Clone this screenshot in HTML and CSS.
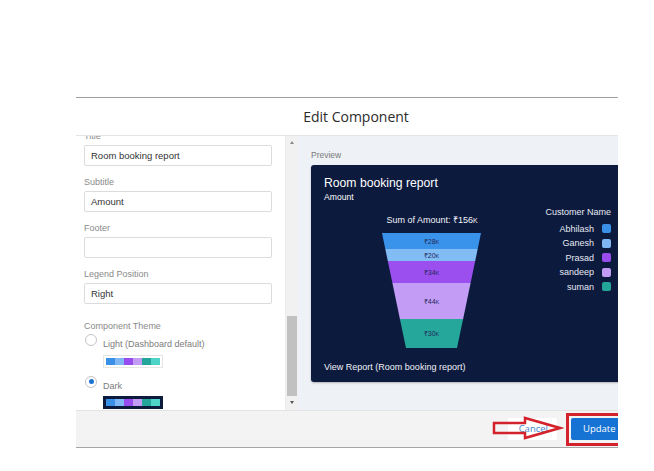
FILE: index.html
```html
<!DOCTYPE html>
<html>
<head>
<meta charset="utf-8">
<link rel="stylesheet" href="styles.css">
</head>
<body>
<div class="stage">
  <div class="clip">
    <div class="modal">
      <div class="modal-header">Edit Component</div>
      <div class="modal-body">
        <div class="form-panel">
          <div class="form-inner">
            <div class="field">
              <div class="label">Title</div>
              <div class="input">Room booking report</div>
            </div>
            <div class="field">
              <div class="label">Subtitle</div>
              <div class="input">Amount</div>
            </div>
            <div class="field">
              <div class="label">Footer</div>
              <div class="input"></div>
            </div>
            <div class="field">
              <div class="label">Legend Position</div>
              <div class="input">Right</div>
            </div>
            <div class="label theme-label">Component Theme</div>
            <div class="radio-row">
              <span class="radio"></span>
              <div class="radio-body">
                <div class="radio-text">Light (Dashboard default)</div>
                <div class="swatch swatch-light">
                  <i class="c1"></i><i class="c2"></i><i class="c3"></i><i class="c4"></i><i class="c5"></i><i class="c6"></i>
                </div>
              </div>
            </div>
            <div class="radio-row radio-row-2">
              <span class="radio checked"></span>
              <div class="radio-body">
                <div class="radio-text">Dark</div>
                <div class="swatch swatch-dark">
                  <i class="c1"></i><i class="c2"></i><i class="c3"></i><i class="c4"></i><i class="c5"></i><i class="c6"></i>
                </div>
              </div>
            </div>
          </div>
        </div>
        <div class="scrollbar">
          <span class="sb-arrow sb-up"></span>
          <span class="sb-space"></span>
          <span class="sb-thumb"></span>
          <span class="sb-arrow sb-down"></span>
        </div>
        <div class="preview">
          <div class="preview-label">Preview</div>
          <div class="card">
            <div class="card-title">Room booking report</div>
            <div class="card-sub">Amount</div>
            <div class="chart-row">
              <div class="chart">
                <div class="chart-title">Sum of Amount: ₹156<span class="k">K</span></div>
                <svg class="funnel" width="216" height="118" viewBox="0 0 216 118">
                  <polygon points="58,2 157,2 153.7,18 61.3,18" fill="#3a93ea"/>
                  <polygon points="61.3,18 153.7,18 151.2,30 63.8,30" fill="#82bcf4"/>
                  <polygon points="63.8,30 151.2,30 146.6,52 68.4,52" fill="#9a4fee"/>
                  <polygon points="68.4,52 146.6,52 139.1,88 75.9,88" fill="#c39cf6"/>
                  <polygon points="75.9,88 139.1,88 133,117 82,117" fill="#25a79c"/>
                  <g class="flabel">
                    <text x="107.5" y="12.5">₹28<tspan font-size="5.5">K</tspan></text>
                    <text x="107.5" y="26.5">₹20<tspan font-size="5.5">K</tspan></text>
                    <text x="107.5" y="43.5">₹34<tspan font-size="5.5">K</tspan></text>
                    <text x="107.5" y="72.5">₹44<tspan font-size="5.5">K</tspan></text>
                    <text x="107.5" y="105">₹30<tspan font-size="5.5">K</tspan></text>
                  </g>
                </svg>
              </div>
              <div class="legend">
                <div class="legend-title">Customer Name</div>
                <div class="legend-item">Abhilash<span class="sq c1"></span></div>
                <div class="legend-item">Ganesh<span class="sq c2"></span></div>
                <div class="legend-item">Prasad<span class="sq c3"></span></div>
                <div class="legend-item">sandeep<span class="sq c4"></span></div>
                <div class="legend-item">suman<span class="sq c5"></span></div>
              </div>
            </div>
            <div class="card-footer">View Report (Room booking report)</div>
          </div>
        </div>
      </div>
      <div class="modal-footer">
        <button class="btn btn-cancel">Cancel</button>
        <button class="btn btn-update">Update</button>
        <svg class="anno-arrow" width="74" height="28" viewBox="0 0 74 28">
          <polygon points="4,9 35,9 35,4 70,14 35,24 35,19 4,19" fill="#ffffff" fill-opacity="0.15" stroke="#d3222b" stroke-width="2.5" stroke-linejoin="miter"/>
        </svg>
        <div class="anno-box"></div>
      </div>
    </div>
  </div>
</div>
</body>
</html>
```
FILE: styles.css
```css
* { box-sizing: border-box; }
html, body { margin: 0; padding: 0; background: #ffffff; }
body { font-family: "Liberation Sans", Arial, sans-serif; }

.stage { padding: 97px 0 0 76px; }
.clip { width: 542px; overflow: hidden; }
.modal { width: 560px; background: #ffffff; border-top: 1.5px solid #9f9f9f; }

.modal-header {
  height: 37.5px;
  display: flex; align-items: center; justify-content: center;
  font-family: "Open Sans", sans-serif; font-size: 14px; color: #2b2b2b;
  border-bottom: 1px solid #e4e4e4;
}

.modal-body { display: flex; height: 274px; }

.form-panel { width: 209px; overflow: hidden; background: #ffffff; }
.form-inner { margin-top: -6px; padding: 0 13px 0 8px; }
.label { font-size: 9px; line-height: 12px; color: #8a8a8a; margin-bottom: 3px; }
.field { margin-bottom: 10px; }
.input {
  height: 21px; border: 1px solid #dcdcdc; border-radius: 2px;
  padding-left: 6px; font-size: 9.5px; color: #333; line-height: 19px;
}
.theme-label { margin-top: 16px; margin-bottom: 2px; }
.radio-row { display: flex; }
.radio-row-2 { margin-top: 7px; }
.radio {
  width: 12px; height: 12px; border-radius: 50%; border: 1px solid #c4c4c4;
  margin-left: 1px; flex: none; position: relative; background: #fff;
}
.radio.checked::after {
  content: ""; position: absolute; left: 2.5px; top: 2.5px;
  width: 5px; height: 5px; border-radius: 50%; background: #1b74d2;
}
.radio-body { margin-left: 6px; margin-top: 4px; }
.radio-text { font-size: 9px; line-height: 12px; color: #7c7c7c; }
.swatch { display: inline-flex; margin-top: 5px; }
.swatch i { display: block; width: 9px; height: 7px; }
.swatch-light { padding: 2px; border: 1px solid #e6e6e6; }
.swatch-dark { padding: 3px; background: #0c1a3e; margin-top: 4px; }
.c1 { background: #3a90e7; }
.c2 { background: #7eb7f3; }
.c3 { background: #994ced; }
.c4 { background: #c29bf4; }
.c5 { background: #23a59a; }
.c6 { background: #4ed3c8; }

.scrollbar {
  width: 13px; background: #f1f1f1; border-left: 1px solid #ececec;
  display: flex; flex-direction: column; align-items: center;
}
.sb-arrow { height: 14px; width: 100%; display: flex; align-items: center; justify-content: center; }
.sb-arrow::before { content: ""; width: 0; height: 0; border-left: 2.5px solid transparent; border-right: 2.5px solid transparent; }
.sb-up::before { border-bottom: 3px solid #8a8a8a; }
.sb-down::before { border-top: 3px solid #555; }
.sb-space { flex: 1; }
.sb-thumb { width: 10px; height: 80px; background: #c1c1c1; }

.preview { flex: 1; background: #eef1f6; padding: 13px 13px 0 13px; }
.preview-label { font-size: 8.5px; line-height: 12px; color: #7a7a7a; margin-bottom: 4px; }
.card {
  background: #0c1a3e; border-radius: 3px; padding: 10px 12px 9px 13px;
  color: #ffffff; box-shadow: 0 1px 2px rgba(0,0,0,0.25);
}
.card-title { font-size: 12.2px; line-height: 16px; }
.card-sub { font-size: 8.6px; line-height: 12px; }
.chart-row { display: flex; justify-content: space-between; }
.chart { width: 216px; }
.chart-title { margin-top: 11px; font-size: 9px; line-height: 12px; text-align: center; color: #f2f4f8; }
.k { font-size: 7px; }
.funnel { display: block; margin-top: 4px; }
.flabel text { font-family: "Liberation Sans", Arial, sans-serif; font-size: 7px; fill: #23285a; text-anchor: middle; }
.legend { padding-top: 3px; display: flex; flex-direction: column; align-items: flex-end; }
.legend-title { font-size: 9px; line-height: 12px; color: #e6eaf2; margin-bottom: 4px; }
.legend-item { display: flex; align-items: center; font-size: 9px; line-height: 14.5px; height: 14.5px; color: #e6eaf2; }
.sq { width: 9px; height: 9px; border-radius: 2px; margin-left: 8px; }
.card-footer { margin-top: 12px; font-size: 9px; line-height: 12px; color: #f0f2f6; }

.modal-footer {
  position: relative;
  height: 38px; background: #f3f3f3; border-top: 1px solid #e3e3e3;
  border-bottom: 1.5px solid #a6a6a6;
  display: flex; align-items: center; justify-content: flex-end; gap: 14px;
  padding-right: 10px;
}
.btn {
  height: 22px; border-radius: 2px; font-family: "Open Sans", sans-serif;
  font-size: 9.5px; padding: 0 11px; border: 1px solid transparent;
  white-space: nowrap;
}
.btn-cancel { background: #ffffff; color: #1b6fc2; padding: 0 8px 0 10px; }
.btn-update { background: #1673d3; color: #ffffff; width: 55px; }
.anno-arrow { position: absolute; left: 414px; top: 3px; }
.anno-box {
  position: absolute; left: 490px; top: 2px; width: 100px; height: 33px;
  border: 3px solid #d3222b;
}
```
